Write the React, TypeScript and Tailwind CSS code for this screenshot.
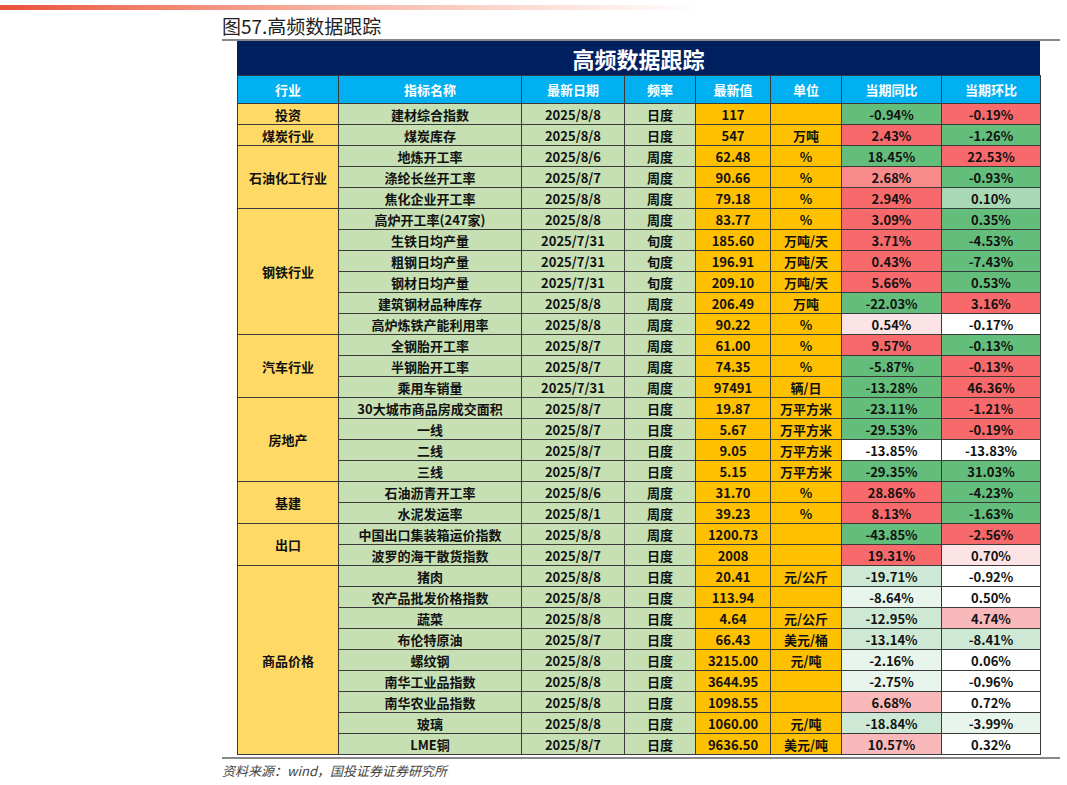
import React from "react";

const G = "#63BE7B", R = "#F8696B", LR = "#F98A8C", LG = "#A9D9B4", W = "#FFFFFF", PK = "#FCE4E6", LG2 = "#CDE9D5", VLG = "#E8F5EC", P2 = "#F9B9BB";

type Row = [string, string, string, string, string, string, string, string, string];
const rows: Row[] = [
  ["建材综合指数","2025/8/8","日度","117","","-0.94%",G,"-0.19%",R],
  ["煤炭库存","2025/8/8","日度","547","万吨","2.43%",R,"-1.26%",G],
  ["地炼开工率","2025/8/6","周度","62.48","%","18.45%",G,"22.53%",R],
  ["涤纶长丝开工率","2025/8/7","周度","90.66","%","2.68%",LR,"-0.93%",G],
  ["焦化企业开工率","2025/8/8","周度","79.18","%","2.94%",R,"0.10%",LG],
  ["高炉开工率(247家)","2025/8/8","周度","83.77","%","3.09%",R,"0.35%",G],
  ["生铁日均产量","2025/7/31","旬度","185.60","万吨/天","3.71%",R,"-4.53%",G],
  ["粗钢日均产量","2025/7/31","旬度","196.91","万吨/天","0.43%",R,"-7.43%",G],
  ["钢材日均产量","2025/7/31","旬度","209.10","万吨/天","5.66%",R,"0.53%",G],
  ["建筑钢材品种库存","2025/8/8","周度","206.49","万吨","-22.03%",G,"3.16%",R],
  ["高炉炼铁产能利用率","2025/8/8","周度","90.22","%","0.54%",PK,"-0.17%",W],
  ["全钢胎开工率","2025/8/7","周度","61.00","%","9.57%",R,"-0.13%",G],
  ["半钢胎开工率","2025/8/7","周度","74.35","%","-5.87%",G,"-0.13%",R],
  ["乘用车销量","2025/7/31","周度","97491","辆/日","-13.28%",G,"46.36%",R],
  ["30大城市商品房成交面积","2025/8/7","日度","19.87","万平方米","-23.11%",G,"-1.21%",R],
  ["一线","2025/8/7","日度","5.67","万平方米","-29.53%",G,"-0.19%",R],
  ["二线","2025/8/7","日度","9.05","万平方米","-13.85%",W,"-13.83%",W],
  ["三线","2025/8/7","日度","5.15","万平方米","-29.35%",G,"31.03%",G],
  ["石油沥青开工率","2025/8/6","周度","31.70","%","28.86%",R,"-4.23%",G],
  ["水泥发运率","2025/8/1","周度","39.23","%","8.13%",R,"-1.63%",G],
  ["中国出口集装箱运价指数","2025/8/8","周度","1200.73","","-43.85%",G,"-2.56%",R],
  ["波罗的海干散货指数","2025/8/7","日度","2008","","19.31%",R,"0.70%",PK],
  ["猪肉","2025/8/8","日度","20.41","元/公斤","-19.71%",LG2,"-0.92%",W],
  ["农产品批发价格指数","2025/8/8","日度","113.94","","-8.64%",VLG,"0.50%",W],
  ["蔬菜","2025/8/8","日度","4.64","元/公斤","-12.95%",LG2,"4.74%",P2],
  ["布伦特原油","2025/8/7","日度","66.43","美元/桶","-13.14%",LG2,"-8.41%",LG2],
  ["螺纹钢","2025/8/8","日度","3215.00","元/吨","-2.16%",VLG,"0.06%",W],
  ["南华工业品指数","2025/8/8","日度","3644.95","","-2.75%",VLG,"-0.96%",W],
  ["南华农业品指数","2025/8/8","日度","1098.55","","6.68%",P2,"0.72%",W],
  ["玻璃","2025/8/8","日度","1060.00","元/吨","-18.84%",LG2,"-3.99%",VLG],
  ["LME铜","2025/8/7","日度","9636.50","美元/吨","10.57%",P2,"0.32%",W],
];
const groups: [number, string][] = [[0,"投资"],[1,"煤炭行业"],[2,"石油化工行业"],[5,"钢铁行业"],[11,"汽车行业"],[14,"房地产"],[18,"基建"],[20,"出口"],[22,"商品价格"]];
const spans = [1,1,3,6,3,4,2,2,9];

export default function App() {
  const td = "border border-[#3a3a3a] text-center p-0 leading-none";
  return (
    <div className="w-[1067px] h-[785px] bg-white relative" style={{ fontFamily: '"Liberation Sans","Noto Sans CJK SC",sans-serif' }}>
      <div className="h-[5px] mt-[5px] w-[700px] bg-gradient-to-r from-[#e8503a] via-[#f6b8a8] to-white" />
      <div className="pl-[222px] mt-[3px] text-[19px] leading-[25px] text-[#222]" style={{ fontFamily: '"Noto Sans CJK SC",sans-serif' }}>图57.高频数据跟踪</div>
      <div className="ml-[222px] w-[838px] h-[2px] mt-[1px] bg-[#888]" />
      <div className="ml-[237px] w-[803px]">
        <div className="h-[34px] bg-[#002060] text-white text-[22px] font-bold flex items-center justify-center" style={{ fontFamily: '"Noto Sans CJK SC",sans-serif' }}>高频数据跟踪</div>
        <table className="w-full border-collapse text-[13px] font-bold text-[#111] table-fixed" style={{ fontFamily: '"Noto Sans CJK SC",sans-serif' }}>
          <colgroup>
            <col className="w-[101px]" /><col className="w-[183px]" /><col className="w-[103px]" /><col className="w-[71px]" />
            <col className="w-[75px]" /><col className="w-[71px]" /><col className="w-[100px]" /><col className="w-[99px]" />
          </colgroup>
          <thead>
            <tr className="h-[28px] bg-[#00B0F0] text-white">
              {["行业","指标名称","最新日期","频率","最新值","单位","当期同比","当期环比"].map(h => <th key={h} className={td}>{h}</th>)}
            </tr>
          </thead>
          <tbody>
            {rows.map((r, i) => {
              const gi = groups.findIndex(g => g[0] === i);
              return (
                <tr key={i} className="h-[21px]">
                  {gi >= 0 && <td rowSpan={spans[gi]} className={td + " bg-[#FFD966]"}>{groups[gi][1]}</td>}
                  <td className={td + " bg-[#C6E0B4]"}>{r[0]}</td>
                  <td className={td + " bg-[#C6E0B4]"}>{r[1]}</td>
                  <td className={td + " bg-[#C6E0B4]"}>{r[2]}</td>
                  <td className={td + " bg-[#FFC000]"}>{r[3]}</td>
                  <td className={td + " bg-[#FFC000]"}>{r[4]}</td>
                  <td className={td} style={{ background: r[6] }}>{r[5]}</td>
                  <td className={td} style={{ background: r[8] }}>{r[7]}</td>
                </tr>
              );
            })}
          </tbody>
        </table>
      </div>
      <div className="ml-[222px] w-[838px] h-[2px] mt-[2px] bg-[#888]" />
      <div className="pl-[222px] mt-[2px] text-[13px] italic text-[#444]" style={{ fontFamily: '"Noto Sans CJK SC",sans-serif' }}>资料来源：wind，国投证券证券研究所</div>
    </div>
  );
}
